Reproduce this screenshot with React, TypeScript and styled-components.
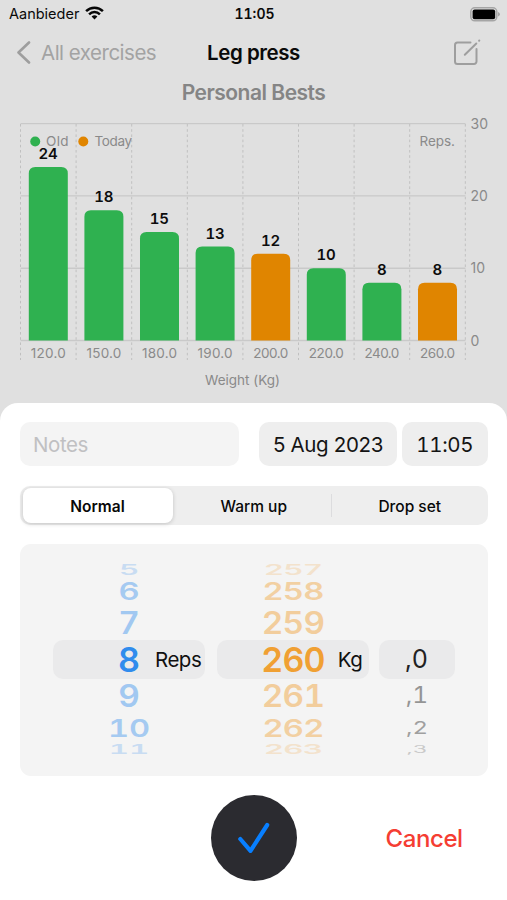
import React from 'react';
import styled, { createGlobalStyle } from 'styled-components';

const GlobalStyle = createGlobalStyle`
  *, *::before, *::after { box-sizing: border-box; }
  body { margin: 0; background: #e0e0e0; font-family: Inter, "Liberation Sans", sans-serif; }
  button { font-family: inherit; border: 0; padding: 0; margin: 0; background: none; }
`;

const Screen = styled.div`
  width: 507px;
  height: 900px;
  display: flex;
  flex-direction: column;
  overflow: hidden;
  background: #e0e0e0;
  color: #0a0a0a;
`;

const StatusBar = styled.header`
  height: 28px;
  flex: none;
  display: grid;
  grid-template-columns: 1fr auto 1fr;
  align-items: center;
  padding: 0 7px 0 9px;
  font-size: 14.5px;
  line-height: 28px;
`;

const Carrier = styled.div`
  display: flex;
  align-items: center;
  gap: 6px;
  letter-spacing: 0;
  svg { display: block; margin-top: -2px; }
`;

const Clock = styled.time`
  font-weight: 600;
  font-size: 14px;
  letter-spacing: 0;
  font-variant-numeric: tabular-nums;
`;

const Battery = styled.div`
  display: flex;
  justify-content: flex-end;
`;

const NavBar = styled.nav`
  height: 49px;
  flex: none;
  display: grid;
  grid-template-columns: 1fr auto 1fr;
  align-items: center;
  padding: 0 16px;
`;

const BackButton = styled.button`
  display: flex;
  align-items: center;
  gap: 10px;
  color: #a3a3a3;
  font-size: 20.5px;
  letter-spacing: -0.5px;
`;

const NavTitle = styled.h1`
  margin: 0;
  font-size: 20.5px;
  font-weight: 600;
  letter-spacing: -0.45px;
`;

const EditButton = styled.button`
  justify-self: end;
  display: flex;
  margin-right: 9px;
`;

const ChartTitle = styled.h2`
  margin: 0;
  height: 30px;
  flex: none;
  text-align: center;
  font-size: 21px;
  line-height: 31px;
  font-weight: 600;
  letter-spacing: -0.5px;
  color: #858585;
`;

const Chart = styled.svg`
  display: block;
  flex: none;
  width: 507px;
  height: 296px;
`;

const AxisText = styled.text<{ $size?: number }>`
  font-size: ${p => p.$size ?? 13.5}px;
  font-weight: 400;
  fill: #8a8a8a;
`;

const ValueText = styled.text`
  font-size: 15px;
  font-weight: 600;
  letter-spacing: -0.2px;
  font-variant-numeric: tabular-nums;
  text-anchor: middle;
  fill: #0c0c0c;
`;

const Sheet = styled.main`
  flex: 1;
  background: #fff;
  border-radius: 18px 18px 0 0;
  padding: 19px 19.5px 0 20px;
`;

const FieldRow = styled.div`
  display: flex;
  height: 44px;
  gap: 5px;
`;

const Notes = styled.input`
  width: 219px;
  height: 44px;
  margin-right: 15px;
  border: 0;
  outline: 0;
  border-radius: 10px;
  padding: 0 13px;
  background: #f4f4f4;
  font: 400 20.5px Inter, sans-serif;
  letter-spacing: -0.4px;
  &::placeholder { color: #c0c0c2; opacity: 1; }
`;

const DateChip = styled.button<{ $w: number; $tabular?: boolean }>`
  width: ${p => p.$w}px;
  height: 44px;
  border-radius: 10px;
  background: #eeeeee;
  color: #141414;
  font-size: 20.5px;
  letter-spacing: -0.35px;
  font-variant-numeric: ${p => (p.$tabular ? 'tabular-nums' : 'normal')};
  white-space: nowrap;
`;

const Segments = styled.div`
  margin-top: 20px;
  height: 39px;
  display: grid;
  grid-template-columns: repeat(3, 1fr);
  border-radius: 10px;
  background: #eeeeee;
  padding: 2px;
`;

const Segment = styled.button<{ $active?: boolean; $divided?: boolean; $shift?: number }>`
  display: flex;
  align-items: center;
  justify-content: center;
  position: relative;
  padding-top: 1px;
  text-indent: ${p => p.$shift ?? 0}px;
  margin-left: ${p => (p.$active ? '0.5px' : 0)};
  margin-right: ${p => (p.$active ? '4px' : 0)};
  border-radius: 8px;
  font-size: 15.5px;
  font-weight: ${p => (p.$active ? 600 : 500)};
  color: #080808;
  background: ${p => (p.$active ? '#fff' : 'transparent')};
  box-shadow: ${p => (p.$active ? '0 1px 4px rgba(0,0,0,.18)' : 'none')};
  &::after {
    content: '';
    display: ${p => (p.$divided ? 'block' : 'none')};
    position: absolute;
    right: -1px;
    top: 6px;
    width: 1.5px;
    height: 23px;
    background: #dcdcde;
  }
`;

const Picker = styled.section`
  margin-top: 18.5px;
  height: 232.5px;
  display: flex;
  padding: 20px 0 0 33px;
  border-radius: 11px;
  background: #f4f4f4;
`;

const Wheel = styled.div<{ $tone: string; $size: number; $weight: number; $w: number; $gap: number }>`
  display: flex;
  flex-direction: column;
  width: ${p => p.$w}px;
  margin-right: ${p => p.$gap}px;
  color: ${p => p.$tone};
  font-size: ${p => p.$size}px;
  font-weight: ${p => p.$weight};
  font-variant-numeric: tabular-nums;
`;

const WheelRow = styled.div<{ $h: number; $scale: number; $alpha: number; $stretch: number }>`
  height: ${p => p.$h}px;
  line-height: ${p => p.$h}px;
  text-align: center;
  white-space: nowrap;
  opacity: ${p => p.$alpha};
  transform: scale(${p => p.$stretch}, ${p => p.$scale});
`;

const Selected = styled.div`
  height: 39.5px;
  display: grid;
  grid-template-columns: 1fr auto 1fr;
  align-items: center;
  line-height: 39.5px;
  border-radius: 10px;
  background: #eaeaeb;
`;

const Value = styled.span<{ $spacing: number }>`
  grid-column: 2;
  letter-spacing: ${p => p.$spacing}px;
`;

const Unit = styled.span<{ $left: number }>`
  grid-column: 3;
  width: 0;
  padding-left: ${p => p.$left}px;
  color: #101010;
  font-size: 20.5px;
  font-weight: 400;
  letter-spacing: -0.5px;
`;

const Actions = styled.footer`
  display: grid;
  grid-template-columns: 1fr 86px 1fr;
  align-items: center;
  margin-top: 19px;
`;

const Confirm = styled.button`
  grid-column: 2;
  width: 86px;
  height: 86px;
  border-radius: 50%;
  background: #2b2b30;
  svg { display: block; }
`;

const Cancel = styled.button`
  justify-self: center;
  margin-left: 64px;
  color: #f53d33;
  font-size: 24px;
  font-weight: 500;
  letter-spacing: -0.4px;
`;

const bars = [
  { kg: '120.0', reps: 24, today: false },
  { kg: '150.0', reps: 18, today: false },
  { kg: '180.0', reps: 15, today: false },
  { kg: '190.0', reps: 13, today: false },
  { kg: '200.0', reps: 12, today: true },
  { kg: '220.0', reps: 10, today: false },
  { kg: '240.0', reps: 8, today: false },
  { kg: '260.0', reps: 8, today: true },
];

const GREEN = '#2fb150';
const ORANGE = '#e08500';
const STEP = 55.6;
const LEFT = 20.5;
const BASE = 233.5;
const UNIT = 7.23;

function PersonalBests() {
  return (
    <Chart viewBox="0 0 507 296">
      {[0, 10, 20, 30].map(v => (
        <g key={v}>
          <line x1={LEFT} x2={465.5} y1={BASE - v * UNIT} y2={BASE - v * UNIT} stroke="#c9c9c9" strokeWidth={1.4} />
          <AxisText $size={14} x={470.5} y={BASE - v * UNIT + 5}>{v}</AxisText>
        </g>
      ))}
      {Array.from({ length: 9 }, (_, i) => (
        <line key={i} x1={LEFT + i * STEP} x2={LEFT + i * STEP} y1={17} y2={253} stroke="#c0c0c0" strokeWidth={1} strokeDasharray="2.6 2.6" />
      ))}
      <circle cx={35.2} cy={34.5} r={5} fill={GREEN} />
      <AxisText x={46} y={39.3} textLength={22.5}>Old</AxisText>
      <circle cx={83.3} cy={34.5} r={5} fill={ORANGE} />
      <AxisText x={94.5} y={39.3} textLength={37.5}>Today</AxisText>
      <AxisText x={419.5} y={39.3} textLength={35.5}>Reps.</AxisText>
      {bars.map((b, i) => {
        const x = 28.8 + i * STEP;
        const top = BASE - b.reps * UNIT;
        return (
          <g key={b.kg}>
            <path d={`M${x} ${BASE}V${top + 6.5}q0-6.5 6.5-6.5h26q6.5 0 6.5 6.5V${BASE}z`} fill={b.today ? ORANGE : GREEN} />
            <ValueText x={x + 19.3} y={top - 8}>{b.reps}</ValueText>
            <AxisText x={x + 2} y={251} textLength={35}>{b.kg}</AxisText>
          </g>
        );
      })}
      <AxisText x={205} y={278} textLength={75}>Weight (Kg)</AxisText>
    </Chart>
  );
}

type WheelProps = {
  rows: (string | null)[];
  tone: string;
  alpha: number[];
  width: number;
  gap?: number;
  size?: number;
  weight?: number;
  spacing?: number;
  unit?: string;
  unitLeft?: number;
};

const heights = [12.6, 30.4, 33.5, 39.5, 33.5, 30.4, 12.6];
const scales = [0.42, 0.71, 0.9, 1, 0.9, 0.71, 0.4];
const stretches = [0.92, 0.96, 0.98, 1, 0.98, 0.96, 0.92];

function NumberWheel({ rows, tone, alpha, width, gap = 0, size = 34, weight = 600, spacing = 0, unit, unitLeft = 0 }: WheelProps) {
  return (
    <Wheel $tone={tone} $size={size} $weight={weight} $w={width} $gap={gap}>
      {rows.map((r, i) =>
        i === 3 ? (
          <Selected key={i}>
            <Value $spacing={spacing}>{r}</Value>
            {unit && <Unit $left={unitLeft}>{unit}</Unit>}
          </Selected>
        ) : (
          <WheelRow key={i} $h={heights[i]} $scale={scales[i]} $stretch={stretches[i]} $alpha={alpha[Math.abs(i - 3)]}>
            <Value $spacing={spacing}>{r}</Value>
          </WheelRow>
        ),
      )}
    </Wheel>
  );
}

export default function App() {
  return (
    <>
      <GlobalStyle />
      <Screen>
        <StatusBar>
          <Carrier>
            Aanbieder
            <svg width="19" height="14" viewBox="0 0 19 14" fill="none" stroke="#050505" strokeWidth="2.5">
              <path d="M1.1 5.1a12 12 0 0 1 16.8 0" />
              <path d="M4.1 8.3a7.7 7.7 0 0 1 10.8 0" />
              <path d="M9.5 13.5 6.6 10.6a4.2 4.2 0 0 1 5.8 0z" fill="#050505" stroke="none" />
            </svg>
          </Carrier>
          <Clock>11:05</Clock>
          <Battery>
            <svg width="30" height="15" viewBox="0 0 30 15">
              <rect x="0.8" y="0.8" width="26" height="13" rx="4" fill="none" stroke="#a5a5a5" strokeWidth="1.5" />
              <rect x="2.6" y="2.6" width="22.6" height="9.6" rx="2" fill="#000" />
              <path d="M28 5q2 .8 2 2.3t-2 2.3z" fill="#a5a5a5" />
            </svg>
          </Battery>
        </StatusBar>
        <NavBar>
          <BackButton>
            <svg width="15" height="24" viewBox="0 0 15 24" fill="none" stroke="#9e9e9e" strokeWidth="2.6" strokeLinecap="round" strokeLinejoin="round">
              <path d="M13 1.5 2.5 11.5 13 21.5" />
            </svg>
            All exercises
          </BackButton>
          <NavTitle>Leg press</NavTitle>
          <EditButton aria-label="Edit">
            <svg width="29" height="27" viewBox="0 0 29 27" fill="none" stroke="#9e9e9e" strokeWidth="2" strokeLinecap="round" strokeLinejoin="round">
              <path d="M17.5 3.5H4.5a2.5 2.5 0 0 0-2.5 2.5v16.5a2.5 2.5 0 0 0 2.5 2.5H21a2.5 2.5 0 0 0 2.5-2.5V10" />
              <path d="M11.8 15.8 23.3 4.5M26.1 1.7l.2-.2" />
            </svg>
          </EditButton>
        </NavBar>
        <ChartTitle>Personal Bests</ChartTitle>
        <PersonalBests />
        <Sheet>
          <FieldRow>
            <Notes placeholder="Notes" />
            <DateChip $w={138}>5 Aug 2023</DateChip>
            <DateChip $w={85.5} $tabular>11:05</DateChip>
          </FieldRow>
          <Segments>
            <Segment $active>Normal</Segment>
            <Segment $divided>Warm up</Segment>
            <Segment $shift={3}>Drop set</Segment>
          </Segments>
          <Picker>
            <NumberWheel width={152} gap={12} rows={['5', '6', '7', '8', '9', '10', '11']} tone="#308ced" alpha={[1, 0.42, 0.4, 0.22]} unit="Reps" unitLeft={15} />
            <NumberWheel width={152} gap={9.5} rows={['257', '258', '259', '260', '261', '262', '263']} tone="#f0a033" alpha={[1, 0.45, 0.42, 0.2]} spacing={-0.8} unit="Kg" unitLeft={13} />
            <NumberWheel width={76} rows={[null, null, null, ',0', ',1', ',2', ',3']} tone="#222222" alpha={[1, 0.45, 0.4, 0.2]} size={25} weight={400} />
          </Picker>
          <Actions>
            <Confirm aria-label="Save">
              <svg width="86" height="86" viewBox="0 0 86 86" fill="none" stroke="#087fff" strokeWidth="4.2" strokeLinecap="round" strokeLinejoin="round">
                <path d="M29.3 44 39.5 55.8 56.2 30" />
              </svg>
            </Confirm>
            <Cancel>Cancel</Cancel>
          </Actions>
        </Sheet>
      </Screen>
    </>
  );
}
